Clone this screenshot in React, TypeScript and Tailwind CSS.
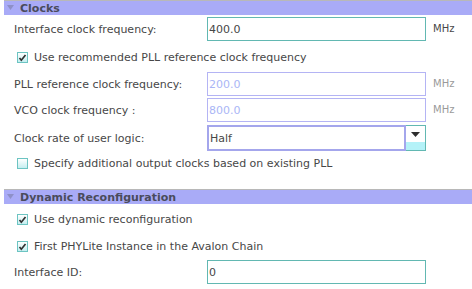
import type { ReactNode } from 'react'

const font = { fontFamily: '"DejaVu Sans", Verdana, sans-serif' }

function Header({ title, first }: { title: string; first?: boolean }) {
  return (
    <div
      className={`ml-[4px] flex h-[15px] items-center border-t border-[#b8b8b8] bg-[#a9abf7] ${first ? '' : 'mt-[20px]'}`}
    >
      <svg width="8" height="6" viewBox="0 0 8 6" className="ml-[3px]">
        <path d="M0 0 L7 0 L3.5 5 Z" fill="#8e90c8" />
      </svg>
      <span className="ml-[5px] text-[11px] leading-none font-bold text-[#4a4b5c]">{title}</span>
    </div>
  )
}

function Check({ checked }: { checked: boolean }) {
  return (
    <span className="flex h-[11px] w-[11px] items-center justify-center border border-[#6cc4c2] bg-gradient-to-b from-white to-[#c4eef0]">
      {checked && (
        <svg width="9" height="9" viewBox="0 0 9 9">
          <path d="M1.5 5 L3.3 7.2 L7.5 2" stroke="#303030" strokeWidth="1.7" fill="none" />
        </svg>
      )}
    </span>
  )
}

function CheckRow({ label, checked, className }: { label: string; checked: boolean; className: string }) {
  return (
    <div className={`ml-[17px] flex h-[12px] items-center gap-[6px] ${className}`}>
      <Check checked={checked} />
      <span className="text-[11px] leading-none text-[#474747]">{label}</span>
    </div>
  )
}

function Field({
  label,
  className,
  children,
  unit,
  unitMuted,
}: {
  label: string
  className: string
  children: ReactNode
  unit?: string
  unitMuted?: boolean
}) {
  return (
    <div className={`flex items-center ${className}`}>
      <span className="w-[207px] pl-[14px] text-[11px] leading-none text-[#474747]">{label}</span>
      {children}
      {unit && (
        <span className={`ml-[7px] text-[10px] leading-none ${unitMuted ? 'text-[#9a9a9a]' : 'text-[#474747]'}`}>
          {unit}
        </span>
      )}
    </div>
  )
}

function Input({ value, disabled }: { value: string; disabled?: boolean }) {
  return (
    <div
      className={`flex h-[24px] w-[219px] items-center border bg-white pl-[1px] text-[11px] leading-none ${
        disabled ? 'border-[#b4b4f4] text-[#aab6f6]' : 'border-[#62b8b2] text-[#474747]'
      }`}
    >
      {value}
    </div>
  )
}

export default function App() {
  return (
    <div className="h-[289px] w-[472px] overflow-hidden bg-white" style={font}>
      <Header title="Clocks" first />
      <Field label="Interface clock frequency:" className="mt-[2px]" unit="MHz">
        <Input value="400.0" />
      </Field>
      <CheckRow label="Use recommended PLL reference clock frequency" checked className="mt-[10px]" />
      <Field label="PLL reference clock frequency:" className="mt-[9px]" unit="MHz" unitMuted>
        <Input value="200.0" disabled />
      </Field>
      <Field label="VCO clock frequency :" className="mt-[2px]" unit="MHz" unitMuted>
        <Input value="800.0" disabled />
      </Field>
      <Field label="Clock rate of user logic:" className="mt-[3px]">
        <div className="flex h-[26px] w-[219px]">
          <div className="flex flex-1 items-center border-2 border-[#a4a6ec] bg-white pl-[1px] text-[11px] leading-none text-[#474747]">
            Half
          </div>
          <div className="flex w-[20px] flex-col border border-l-0 border-[#62b8b2]">
            <div className="flex flex-1 items-center justify-center bg-white">
              <svg width="9" height="5" viewBox="0 0 9 5">
                <path d="M0 0 L9 0 L4.5 5 Z" fill="#2e2e2e" />
              </svg>
            </div>
            <div className="h-[8px] bg-[#b4f2f8]" />
          </div>
        </div>
      </Field>
      <CheckRow label="Specify additional output clocks based on existing PLL" checked={false} className="mt-[6px]" />

      <Header title="Dynamic Reconfiguration" />
      <CheckRow label="Use dynamic reconfiguration" checked className="mt-[9px]" />
      <CheckRow label="First PHYLite Instance in the Avalon Chain" checked className="mt-[15px]" />
      <Field label="Interface ID:" className="mt-[8px]">
        <Input value="0" />
      </Field>
    </div>
  )
}
